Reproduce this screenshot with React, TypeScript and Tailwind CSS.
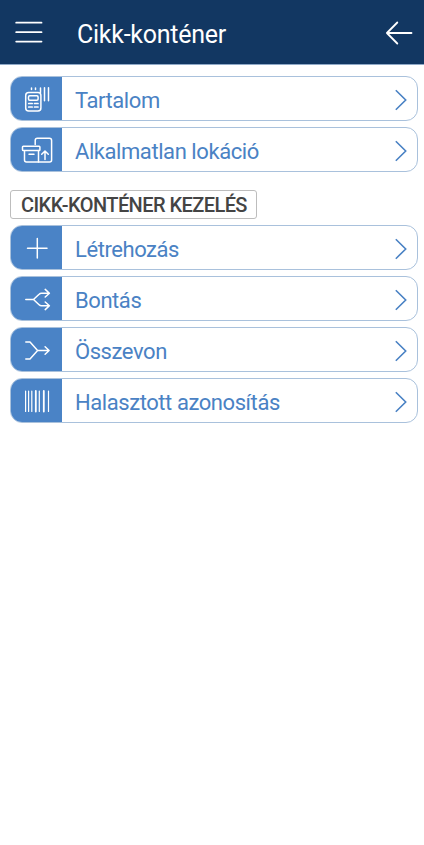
import * as React from "react";

interface MenuRowProps {
  label: string;
  icon: React.ReactNode;
}

// Icons share one 51x43 canvas, the size of the blue cell
const TerminalIcon = () => (
  <>
    <rect x="14.7" y="15.5" width="15.2" height="18.4" rx="3" />
    <rect x="17.5" y="18.8" width="9.6" height="4.4" rx="1.2" />
    <path d="M17.7 26.5h3.5M23.5 26.5h3.5M17.7 30h3.5M23.5 30h3.5" strokeWidth="1.7" />
    <path d="M20.5 11v1.5M24.5 11v1.5M29.5 11v4.5M33.5 10.8v13M37.5 10.8v13" />
  </>
);

const LocationIcon = () => (
  <>
    <path d="M24.2 16.5v-4a2.2 2.2 0 0 1 2.2-2.2h12a2.2 2.2 0 0 1 2.2 2.2v19.6a2 2 0 0 1-2 2H15.5a2 2 0 0 1-2-2v-9.3" />
    <rect x="11.5" y="18.2" width="17.4" height="4.4" rx="0.8" />
    <path d="M27.5 22.6v11.4M18 26.2h5M34 31.6v-8.6M30.7 26.3l3.3-3.3 3.3 3.3" />
  </>
);

const PlusIcon = () => <path d="M16.5 22.3h19.5M26.3 12.5v19.5" />;

const SplitIcon = () => (
  <path d="M14.8 22.5h7.7l5.6-5.3q1-1 2.4-1h7.7M22.5 22.5l5.6 5.3q1 1 2.4 1h7.7M34.2 12.4l4.2 3.8-4.2 3.8M34.2 25l4.2 3.8-4.2 3.8" />
);

const MergeIcon = () => (
  <path d="M14.8 14.1h4.2l7.6 8.4-7.6 8.4h-4.2M26.6 22.5h11.4M34.1 18.7l4 3.8-4 3.8" />
);

const BarcodeIcon = () => (
  <>
    <path d="M14.6 12v20.5M17.6 12v20.5M20.8 12v20.5M28.3 12v20.5M37.5 12v20.5" strokeWidth="1.2" />
    <path d="M24.8 12v20.5M32.8 12v20.5" strokeWidth="1.8" />
  </>
);

const MenuRow = ({ label, icon }: MenuRowProps) => (
  <button className="flex h-[45px] w-full items-center overflow-hidden rounded-[12px] border border-[#a9c1dc] bg-white text-left text-[#4a82c4]">
    <span className="h-full w-[51.3px] shrink-0 bg-[#4a83c6]">
      <svg
        viewBox="0 0 51 43"
        className="h-[43px] w-[51px]"
        fill="none"
        stroke="white"
        strokeWidth="1.5"
        strokeLinecap="round"
        strokeLinejoin="round"
      >
        {icon}
      </svg>
    </span>
    <span className="ml-[12.7px] pt-1 text-[22px] leading-7 tracking-[-0.43px] whitespace-nowrap">{label}</span>
    <svg
      viewBox="0 0 14 22"
      className="mt-[2px] mr-[9px] ml-auto h-[22px] w-[14px] shrink-0"
      fill="none"
      stroke="currentColor"
      strokeWidth="1.6"
    >
      <path d="M1.8 1.3L11.7 11L1.8 20.7" />
    </svg>
  </button>
);

export default function App() {
  return (
    <div className="min-h-[845px] w-full bg-white font-['Roboto',sans-serif]">
      <header className="flex h-[65px] items-center border-b border-[#8fa9c7] bg-[#123762] text-white">
        <svg viewBox="0 0 28 24" className="ml-[15px] h-6 w-7" stroke="currentColor" strokeWidth="1.8" strokeLinecap="round">
          <path d="M1.2 2.7h25.3M1.2 12.2h25.3M1.2 21.6h25.3" />
        </svg>
        <h1 className="mt-1.5 ml-[34px] text-[25px] leading-8 tracking-[-0.25px]">Cikk-konténer</h1>
        <svg
          viewBox="0 0 28 24"
          className="mr-[11px] ml-auto h-6 w-7 overflow-visible"
          fill="none"
          stroke="currentColor"
          strokeWidth="1.8"
          strokeLinecap="round"
          strokeLinejoin="round"
        >
          <path d="M26.5 13H1.9M12.3 2.5L1.9 13l10.4 10.5" />
        </svg>
      </header>

      <main className="pt-[11px] pr-[6px] pl-[10px]">
        <div className="flex flex-col gap-1.5">
          <MenuRow label="Tartalom" icon={<TerminalIcon />} />
          <MenuRow label="Alkalmatlan lokáció" icon={<LocationIcon />} />
        </div>
        <h2 className="mt-[18px] mb-[6px] flex h-[29px] w-[247px] items-center rounded-[3px] border border-[#bdbdbd] pt-px pl-[10px] text-[20px] font-medium tracking-[-0.57px] whitespace-nowrap text-[#444]">
          CIKK-KONTÉNER KEZELÉS
        </h2>
        <div className="flex flex-col gap-1.5">
          <MenuRow label="Létrehozás" icon={<PlusIcon />} />
          <MenuRow label="Bontás" icon={<SplitIcon />} />
          <MenuRow label="Összevon" icon={<MergeIcon />} />
          <MenuRow label="Halasztott azonosítás" icon={<BarcodeIcon />} />
        </div>
      </main>
    </div>
  );
}
